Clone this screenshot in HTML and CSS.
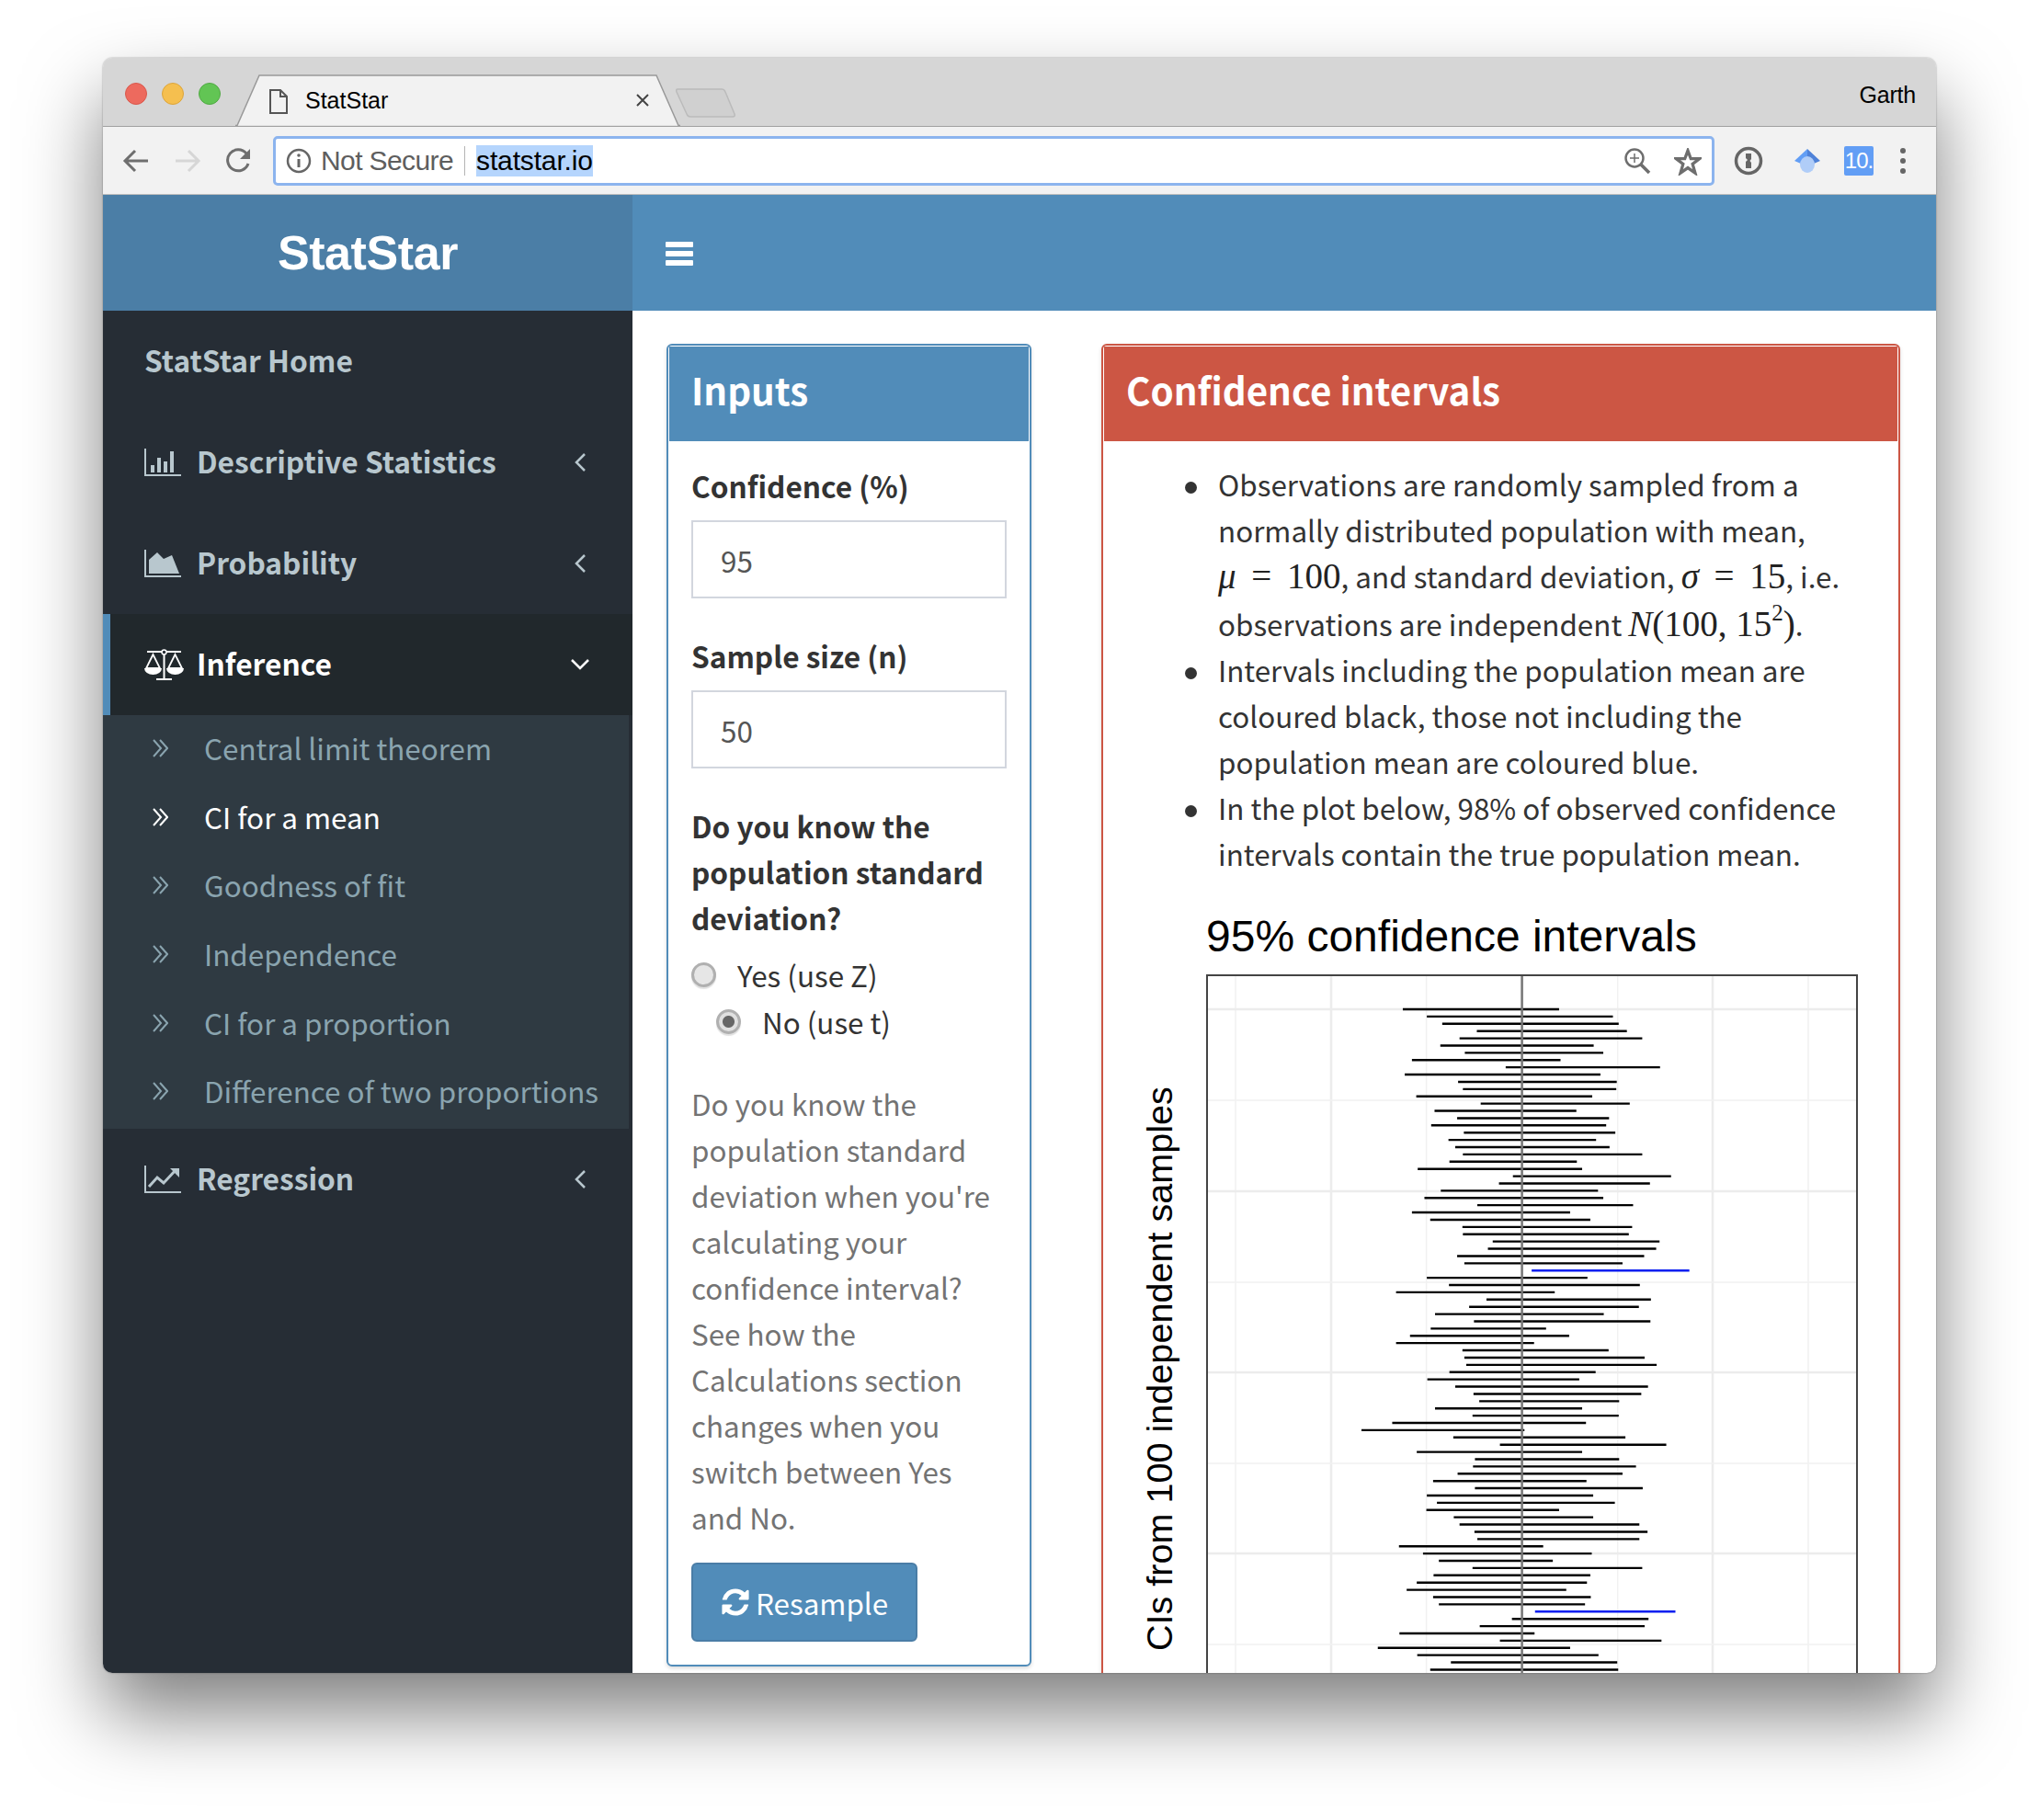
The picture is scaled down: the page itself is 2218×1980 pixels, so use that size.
FILE: index.html
```html
<!DOCTYPE html>
<html lang="en">
<head>
    <meta charset="UTF-8">
    <meta name="viewport" content="width=device-width, initial-scale=1.0">
    <title>StatStar</title>
    <link rel="stylesheet" href="styles.css">
</head>
<body>

<div class="window">

    <!-- browser tab strip -->
    <div class="tabstrip">
        <div class="lights">
            <span class="light red"></span>
            <span class="light yellow"></span>
            <span class="light green"></span>
        </div>
        <div class="tab">
            <svg class="tab-shape" width="484" height="56" viewBox="0 0 484 56">
                <path d="M0 55.500H2L26 1H458L482 55.500H484" fill="#f2f2f2" stroke="#999" stroke-width="1.500"/>
            </svg>
            <svg class="tab-doc" width="20" height="27" viewBox="0 0 20 27">
                <path d="M1 1H12L19 8V26H1ZM12 1V8H19" fill="none" stroke="#555" stroke-width="2"/>
            </svg>
            <span class="tab-title">StatStar</span>
            <svg class="tab-close" width="14" height="14" viewBox="0 0 14 14">
                <path d="M1 1L13 13M13 1L1 13" stroke="#444" stroke-width="2"/>
            </svg>
        </div>
        <svg class="newtab" width="66" height="32" viewBox="0 0 66 32">
            <path d="M2 1H50Q53 1 54 4L64 28Q65 31 62 31H16Q13 31 12 28L1 4Q0 1 2 1Z" fill="#d0d0d0" stroke="#bbb" stroke-width="1.500"/>
        </svg>
        <span class="profile">Garth</span>
    </div>

    <!-- browser toolbar -->
    <div class="toolbar">
        <svg class="navicon" width="30" height="30" viewBox="0 0 30 30">
            <path d="M28 15H4M14 4L3 15L14 26" fill="none" stroke="#6e6e6e" stroke-width="3"/>
        </svg>
        <svg class="navicon" width="30" height="30" viewBox="0 0 30 30">
            <path d="M2 15H26M16 4L27 15L16 26" fill="none" stroke="#d6d6d6" stroke-width="3"/>
        </svg>
        <svg class="navicon" width="30" height="30" viewBox="0 0 30 30">
            <path d="M25 18A11.500 11.500 0 1 1 23 7" fill="none" stroke="#6e6e6e" stroke-width="3"/>
            <path d="M27 2V13H16Z" fill="#6e6e6e"/>
        </svg>
        <div class="omnibox">
            <svg width="28" height="28" viewBox="0 0 28 28">
                <circle cx="14" cy="14" r="12" fill="none" stroke="#666" stroke-width="2.500"/>
                <path d="M14 12V21" stroke="#666" stroke-width="3"/>
                <circle cx="14" cy="8" r="1.800" fill="#666"/>
            </svg>
            <span class="not-secure">Not Secure</span>
            <span class="omni-sep"></span>
            <span class="url">statstar.io</span>
            <svg class="omni-zoom" width="30" height="30" viewBox="0 0 30 30">
                <circle cx="12" cy="12" r="9.500" fill="none" stroke="#6e6e6e" stroke-width="2.500"/>
                <path d="M12 7V17M7 12H17" stroke="#6e6e6e" stroke-width="1.500"/>
                <path d="M19 19L28 28" stroke="#6e6e6e" stroke-width="3.500"/>
            </svg>
            <svg class="omni-star" width="30" height="30" viewBox="0 0 32 32">
                <path d="M16 3L19.500 12.500H29.500L21.500 18.500L24.500 29L16 23L7.500 29L10.500 18.500L2.500 12.500H12.500Z" fill="none" stroke="#6e6e6e" stroke-width="3.500"/>
            </svg>
        </div>
        <svg class="ext-onepass" width="32" height="32" viewBox="0 0 32 32">
            <circle cx="16" cy="16" r="13.500" fill="none" stroke="#666" stroke-width="3.500"/>
            <path d="M13 8H19V14L17.500 16L19 18V24H13V17L15 15L13 13Z" fill="#666"/>
        </svg>
        <svg class="ext-hat" width="30" height="28" viewBox="0 0 30 28">
            <path d="M15 1L1 14L15 20Z" fill="#629ef5"/>
            <path d="M15 1L29 14L15 20Z" fill="#4f82d8"/>
            <ellipse cx="15" cy="18" rx="8" ry="9" fill="#b0cdf8"/>
        </svg>
        <span class="ext-count">10.</span>
        <span class="menu-dots"><i></i><i></i><i></i></span>
    </div>

    <div class="app">

        <aside class="side">
            <div class="logo">StatStar</div>
            <ul class="menu">
                <li class="menu-row"><span class="menu-label">StatStar Home</span></li>
                <li class="menu-row">
                    <svg class="menu-icon" width="40" height="30" viewBox="0 0 40 30">
                        <path d="M1 0V29H40" fill="none" stroke="#b8c7ce" stroke-width="2"/>
                        <path d="M7 18h4v8h-4zM14 10h4v16h-4zM21 14h4v12h-4zM28 3h4v23h-4z" fill="#b8c7ce"/>
                    </svg>
                    <span class="menu-label">Descriptive Statistics</span>
                    <svg class="chev" width="12" height="20" viewBox="0 0 12 20"><path d="M11 1L2 10L11 19" fill="none" stroke="#b8c7ce" stroke-width="2.500"/></svg>
                </li>
                <li class="menu-row">
                    <svg class="menu-icon" width="40" height="30" viewBox="0 0 40 30">
                        <path d="M1 0V29H40" fill="none" stroke="#b8c7ce" stroke-width="2"/>
                        <path d="M5 26V11L14 3L21 10L30 6L38 26Z" fill="#b8c7ce"/>
                    </svg>
                    <span class="menu-label">Probability</span>
                    <svg class="chev" width="12" height="20" viewBox="0 0 12 20"><path d="M11 1L2 10L11 19" fill="none" stroke="#b8c7ce" stroke-width="2.500"/></svg>
                </li>
                <li class="menu-row active">
                    <svg class="menu-icon scale" width="43" height="34" viewBox="0 0 43 34">
                        <path d="M21.500 4V32M13 33H30M3 3H40" stroke="#fff" stroke-width="2" fill="none"/>
                        <circle cx="21.500" cy="3.500" r="2.500" fill="#262d35" stroke="#fff" stroke-width="1.500"/>
                        <path d="M9.500 6L2 21H17ZM33.500 6L26 21H41Z" fill="none" stroke="#fff" stroke-width="1.800"/>
                        <path d="M0 21H19A9.500 7 0 0 1 0 21ZM24 21H43A9.500 7 0 0 1 24 21Z" fill="#fff"/>
                    </svg>
                    <span class="menu-label">Inference</span>
                    <svg class="chev-down" width="20" height="12" viewBox="0 0 20 12"><path d="M1 1L10 10L19 1" fill="none" stroke="#fff" stroke-width="2.500"/></svg>
                </li>
                <li>
                    <ul class="submenu">
                        <li class="sub-row">
                            <svg class="sub-icon" width="17" height="20" viewBox="0 0 17 20"><path d="M1 1L9 10L1 19M8 1L16 10L8 19" fill="none" stroke="currentColor" stroke-width="2"/></svg>
                            Central limit theorem
                        </li>
                        <li class="sub-row current">
                            <svg class="sub-icon" width="17" height="20" viewBox="0 0 17 20"><path d="M1 1L9 10L1 19M8 1L16 10L8 19" fill="none" stroke="currentColor" stroke-width="2"/></svg>
                            CI for a mean
                        </li>
                        <li class="sub-row">
                            <svg class="sub-icon" width="17" height="20" viewBox="0 0 17 20"><path d="M1 1L9 10L1 19M8 1L16 10L8 19" fill="none" stroke="currentColor" stroke-width="2"/></svg>
                            Goodness of fit
                        </li>
                        <li class="sub-row">
                            <svg class="sub-icon" width="17" height="20" viewBox="0 0 17 20"><path d="M1 1L9 10L1 19M8 1L16 10L8 19" fill="none" stroke="currentColor" stroke-width="2"/></svg>
                            Independence
                        </li>
                        <li class="sub-row">
                            <svg class="sub-icon" width="17" height="20" viewBox="0 0 17 20"><path d="M1 1L9 10L1 19M8 1L16 10L8 19" fill="none" stroke="currentColor" stroke-width="2"/></svg>
                            CI for a proportion
                        </li>
                        <li class="sub-row">
                            <svg class="sub-icon" width="17" height="20" viewBox="0 0 17 20"><path d="M1 1L9 10L1 19M8 1L16 10L8 19" fill="none" stroke="currentColor" stroke-width="2"/></svg>
                            Difference of two proportions
                        </li>
                    </ul>
                </li>
                <li class="menu-row">
                    <svg class="menu-icon" width="40" height="30" viewBox="0 0 40 30">
                        <path d="M1 0V29H40" fill="none" stroke="#b8c7ce" stroke-width="2"/>
                        <path d="M5 23L14 13L21 19L34 5" fill="none" stroke="#b8c7ce" stroke-width="3"/>
                        <path d="M28 3H38V13Z" fill="#b8c7ce"/>
                    </svg>
                    <span class="menu-label">Regression</span>
                    <svg class="chev" width="12" height="20" viewBox="0 0 12 20"><path d="M11 1L2 10L11 19" fill="none" stroke="#b8c7ce" stroke-width="2.500"/></svg>
                </li>
            </ul>
        </aside>

        <main class="main">
            <div class="navbar">
                <span class="hamburger"><i></i><i></i><i></i></span>
            </div>

            <div class="content">

                <section class="box box-inputs">
                    <h3 class="box-head">Inputs</h3>
                    <div class="box-body">
                        <label class="field-label">Confidence (%)</label>
                        <input class="field" type="text" value="95">

                        <label class="field-label">Sample size (n)</label>
                        <input class="field" type="text" value="50">

                        <label class="field-label question">Do you know the population standard deviation?</label>
                        <label class="radio-row"><input type="radio" name="known"> Yes (use Z)</label>
                        <label class="radio-row inline"><input type="radio" name="known" checked> No (use t)</label>

                        <p class="help">Do you know the population standard deviation when you're calculating your confidence interval? See how the Calculations section changes when you switch between Yes and No.</p>

                        <button class="btn">
                            <svg width="34" height="34" viewBox="0 0 1792 1792"><path fill="#fff" d="M1639 1056q0 5-1 7-64 268-268 434.500t-478 166.500q-146 0-282.500-55t-243.500-157l-129 129q-19 19-45 19t-45-19-19-45v-448q0-26 19-45t45-19h448q26 0 45 19t19 45-19 45l-137 137q71 66 161 102t187 36q134 0 250-65t186-179q11-17 53-117 8-23 30-23h192q13 0 22.500 9.500t9.500 22.500zm25-800v448q0 26-19 45t-45 19h-448q-26 0-45-19t-19-45 19-45l138-138q-148-137-349-137-134 0-250 65t-186 179q-11 17-53 117-8 23-30 23h-199q-13 0-22.500-9.500t-9.500-22.500v-7q65-268 270-434.500t480-166.500q146 0 284 55.500t245 156.500l130-129q19-19 45-19t45 19 19 45z"/></svg>
                            Resample
                        </button>
                    </div>
                </section>

                <section class="box box-results">
                    <h3 class="box-head">Confidence intervals</h3>
                    <ul class="notes">
                        <li>Observations are randomly sampled from a normally distributed population with mean, <span class="math eq"><em>&mu;</em> = 100</span>, and standard deviation, <span class="math eq"><em>&sigma;</em> = 15</span>, i.e. observations are independent <span class="math"><em>N</em>(100, 15<sup>2</sup>)</span>.</li>
                        <li>Intervals including the population mean are coloured black, those not including the population mean are coloured blue.</li>
                        <li>In the plot below, 98% of observed confidence intervals contain the true population mean.</li>
                    </ul>

                    <!-- plot drawn in page coordinates so the gridlines read straight off the reference -->
                    <svg class="plot" width="790" height="860" viewBox="1240 970 790 860">
                        <text class="plot-title" x="1312" y="1035">95% confidence intervals</text>
                        <text class="plot-ylabel" transform="translate(1275 1796) rotate(-90)">CIs from 100 independent samples</text>

                        <path d="M1344 1060V1830M1551.600 1060V1830M1759.700 1060V1830M1967 1060V1830" stroke="#f1f1f1" stroke-width="1.500"/>
                        <path d="M1448 1060V1830M1655.600 1060V1830M1863 1060V1830" stroke="#ececec" stroke-width="2.500"/>
                        <path d="M1313 1197H2020M1313 1395H2020M1313 1592H2020M1313 1789H2020" stroke="#f1f1f1" stroke-width="1.500"/>
                        <path d="M1313 1098H2020M1313 1296H2020M1313 1493H2020M1313 1690H2020" stroke="#ececec" stroke-width="2.500"/>

                        <g transform="translate(1220 1098) scale(0.523 7.895)">
                            <path class="ci" stroke="#000" d="M585 0H910M635 1H1022M667 2H1034M739 3H1051M703 4H1083M663 5H982M714 6H1002M604 7H913M799 8H1120M589 9H996M700 10H1030M710 11H1029M613 12H979M747 13H1057M651 14H946M698 15H1014M644 16H1008M712 17H1027M680 18H987M694 19H1015M710 20H1083M682 21H947M616 22H958M814 23H1143M785 24H1099M664 25H991M630 26H1002M740 27H1064M604 28H933M642 29H975M709 30H1062M710 31H1055M772 32H1119M762 33H1112M698 34H1087M713 35H1042M635 37H969M681 38H1078M571 39H901M759 40H1101M723 41H1076M652 42H1003M733 43H1100M643 44H883M600 45H931M571 46H858M709 47H1013M713 48H1088M717 49H1113M682 50H986M636 51H952M694 52H1095M732 53H1081M744 54H1035M652 55H958M730 56H1034M563 57H966M499 58H838M690 59H1048M787 60H1133M614 61H958M735 62H1035M731 63H1070M699 64H1042M648 65H967M735 66H1084M635 67H981M656 68H1026M634 69H910M691 70H981M703 71H1077M734 72H1094M740 73H1077M577 74H877M627 75H978M660 76H897M730 77H1083M649 78H975M614 79H968M593 80H925M648 81H976M660 82H964M812 84H1096M745 85H1088M578 86H859M787 87H1123M533 88H933M615 89H992M685 90H1031M642 91H1033"/>
                            <path class="ci" stroke="#0a1ff0" d="M853 36H1181M860 83H1152"/>
                        </g>

                        <path d="M1655.600 1060V1830" stroke="#777" stroke-width="2.500"/>
                        <path d="M1313 1830V1061H2020V1830" fill="none" stroke="#444" stroke-width="2"/>
                    </svg>
                </section>

            </div>
        </main>

    </div>
</div>

</body>
</html>
```
FILE: styles.css
```css
/* Page and browser window */
html, body {
    margin: 0;
    padding: 0;
    background-color: #fff;
}

body {
    width: 2218px;
    height: 1980px;
    padding: 63px 0 0 112px;
    box-sizing: border-box;
    overflow: hidden;
    font-family: "Noto Sans CJK SC", "Source Sans Pro", "Noto Sans", sans-serif;
    color: #333;
}

ul {
    list-style: none;
    margin: 0;
    padding: 0;
}

.window {
    width: 1994px;
    height: 1757px;
    display: flex;
    flex-direction: column;
    border-radius: 10px;
    overflow: hidden;
    background-color: #fff;
    box-shadow: 0 44px 84px rgba(0, 0, 0, 0.5), 0 0 2px rgba(0, 0, 0, 0.4);
}

/* Tab strip */
.tabstrip {
    height: 74px;
    flex: none;
    display: flex;
    align-items: flex-end;
    background-color: #d6d6d6;
    box-sizing: border-box;
    font-family: "Liberation Sans", Arial, sans-serif;
    color: #000;
}

.lights {
    display: flex;
    gap: 16px;
    padding: 0 0 23px 24px;
    width: 120px;
    flex: none;
}

.light {
    width: 24px;
    height: 24px;
    border-radius: 50%;
    box-sizing: border-box;
}

.light.red {
    background-color: #ed6a5e;
    border: 1px solid #d9584c;
}

.light.yellow {
    background-color: #f5bf4f;
    border: 1px solid #dca53b;
}

.light.green {
    background-color: #62c554;
    border: 1px solid #51a944;
}

.tab {
    position: relative;
    width: 484px;
    height: 56px;
    flex: none;
    display: flex;
    align-items: center;
    padding: 0 0 0 37px;
    box-sizing: border-box;
}

.tab-shape {
    position: absolute;
    left: 0;
    top: 0;
}

.tab-doc {
    position: relative;
    top: 1px;
}

.tab-title {
    position: relative;
    margin-left: 19px;
    font-size: 25px;
    flex: 1;
}

.tab-close {
    position: relative;
    margin-right: 34px;
}

.newtab {
    margin: 0 0 9px -5px;
    flex: none;
}

.profile {
    margin-left: auto;
    padding: 0 22px 19px 0;
    font-size: 25px;
    letter-spacing: -0.2px;
}

/* Toolbar */
.toolbar {
    height: 75px;
    flex: none;
    display: flex;
    align-items: center;
    background-color: #f2f2f2;
    border-top: 1.5px solid #a0a0a0;
    border-bottom: 1.5px solid #bdbdbd;
    box-sizing: border-box;
    padding-left: 21px;
    font-family: "Liberation Sans", Arial, sans-serif;
}

.navicon {
    margin-right: 26px;
    flex: none;
}

.omnibox {
    width: 1568px;
    height: 54px;
    margin-left: -4px;
    flex: none;
    display: flex;
    align-items: center;
    box-sizing: border-box;
    padding-left: 11px;
    background-color: #fff;
    border: 3px solid #8cb4ee;
    border-radius: 5px;
}

.not-secure {
    margin-left: 10px;
    font-size: 30px;
    letter-spacing: -0.6px;
    color: #5e5e5e;
}

.omni-sep {
    width: 1px;
    height: 32px;
    margin: 0 12px 0 12px;
    background-color: #b5b5b5;
}

.url {
    height: 34px;
    line-height: 34px;
    font-size: 30px;
    letter-spacing: -0.15px;
    color: #000;
    background-color: #b5d5fd;
}

.omni-zoom {
    margin-left: auto;
}

.omni-star {
    margin: 2px 11px 0 25px;
}

.ext-onepass {
    margin-left: 21px;
    flex: none;
}

.ext-hat {
    margin-left: 33px;
    flex: none;
}

.ext-count {
    width: 32px;
    height: 32px;
    margin-left: 25px;
    flex: none;
    border-radius: 2px;
    line-height: 32px;
    text-align: center;
    font-size: 24px;
    letter-spacing: -1px;
    color: #fff;
    background-color: #629ef5;
}

.menu-dots {
    margin-left: 29px;
    display: flex;
    flex-direction: column;
    gap: 5px;
}

.menu-dots i {
    display: block;
    width: 6px;
    height: 6px;
    border-radius: 50%;
    background-color: #666;
}

/* App frame */
.app {
    flex: 1;
    min-height: 0;
    display: flex;
}

.side {
    width: 576px;
    flex: none;
    background-color: #262d35;
    color: #b8c7ce;
}

.logo {
    height: 126px;
    line-height: 126px;
    text-align: center;
    font-family: "Liberation Sans", Arial, sans-serif;
    font-size: 52px;
    font-weight: bold;
    letter-spacing: -0.4px;
    color: #fff;
    background-color: #4b7ea6;
}

.menu-row {
    height: 110px;
    display: flex;
    align-items: center;
    padding: 0 51px 0 45px;
    box-sizing: border-box;
    font-size: 31.7px;
    font-weight: 700;
}

.menu-label {
    position: relative;
    top: -2px;
}

.menu-icon {
    margin-right: 17px;
    flex: none;
}

.chev {
    margin-left: auto;
}

.chev-down {
    margin-left: auto;
    margin-right: -4px;
}

.menu-row.active {
    padding-left: 37px;
    border-left: 8px solid #518cb9;
    background-color: #21282c;
    color: #fff;
}

.menu-icon.scale {
    margin-right: 14px;
}

.submenu {
    margin-right: 4px;
    padding-bottom: 2px;
    background-color: #2f3a42;
}

.sub-row {
    height: 74.6px;
    display: flex;
    align-items: center;
    padding: 0 0 2px 54px;
    box-sizing: border-box;
    font-size: 31.4px;
    line-height: 40px;
    color: #8aa4af;
}

.sub-row.current {
    color: #fff;
}

.sub-icon {
    margin-right: 39px;
    flex: none;
}

/* Main area */
.main {
    flex: 1;
    min-width: 0;
    display: flex;
    flex-direction: column;
}

.navbar {
    height: 126px;
    flex: none;
    display: flex;
    align-items: center;
    padding-left: 36px;
    background-color: #518cb9;
}

.hamburger {
    display: flex;
    flex-direction: column;
    gap: 4px;
    padding-top: 1px;
}

.hamburger i {
    display: block;
    width: 30px;
    height: 6px;
    border-radius: 1px;
    background-color: #fff;
}

.content {
    flex: 1;
    min-height: 0;
    display: flex;
    align-items: flex-start;
    gap: 76px;
    padding: 36px 39px 0 37px;
    overflow: hidden;
}

/* Boxes */
.box {
    box-sizing: border-box;
    border: 2px solid #518cb9;
    border-radius: 6px;
    background-color: #fff;
    box-shadow: 0 2px 4px rgba(0, 0, 0, 0.15);
}

.box-head {
    height: 103px;
    margin: 1px 1px 0;
    line-height: 94px;
    padding-left: 24px;
    font-size: 40.3px;
    font-weight: 700;
    color: #fff;
    background-color: #518cb9;
}

.box-inputs {
    width: 397px;
    flex: none;
}

.box-body {
    padding: 23px 25px 25px;
    font-size: 31.4px;
    line-height: 50px;
}

.field-label {
    display: block;
    font-size: 31.6px;
    font-weight: 700;
}

.field {
    display: block;
    width: 343px;
    height: 85px;
    margin: 13px 0 37px;
    padding: 2px 0 0 30px;
    box-sizing: border-box;
    border: 2px solid #d2d6de;
    font-family: inherit;
    font-size: 31.4px;
    color: #555;
    outline: none;
}

.question {
    margin-bottom: 12px;
}

.radio-row {
    display: flex;
    align-items: center;
    height: 51px;
    gap: 23px;
}

.radio-row.inline {
    margin-left: 27px;
}

.radio-row input {
    appearance: none;
    width: 27px;
    height: 27px;
    margin: 0;
    flex: none;
    border: 3px solid #b0b0b0;
    border-radius: 50%;
    background-color: #e6e6e6;
    box-shadow: 0 2px 1px rgba(0, 0, 0, 0.12);
}

.radio-row input:checked {
    background: radial-gradient(circle, #666 0 6px, #e0e0e0 7px);
}

.help {
    margin: 39px 0 24px;
    color: #737373;
}

.btn {
    width: 246px;
    height: 86px;
    display: flex;
    align-items: center;
    padding: 0 0 0 29px;
    gap: 5px;
    box-sizing: border-box;
    border: 2px solid #4a7da6;
    border-radius: 6px;
    background-color: #518cb9;
    color: #fff;
    font-family: inherit;
    font-size: 31.4px;
    cursor: pointer;
}

.box-results {
    flex: 1;
    min-width: 0;
    height: 1600px;
    border-color: #cc5644;
}

.box-results .box-head {
    background-color: #cc5644;
}

.notes {
    padding: 22px 50px 0 125px;
    font-size: 31.4px;
    line-height: 50px;
}

.notes li::before {
    content: "";
    display: inline-block;
    width: 13px;
    height: 13px;
    margin: 0 23px 0 -36px;
    border-radius: 50%;
    background-color: #333;
    vertical-align: 3px;
}

.math {
    font-family: "Liberation Serif", "Times New Roman", serif;
    font-size: 39px;
    line-height: 1;
    white-space: nowrap;
    color: #222;
}

.math.eq {
    word-spacing: 7px;
}

.math sup {
    font-size: 25px;
    line-height: 30px;
    vertical-align: 17px;
}

/* Plot */
.plot {
    display: block;
    margin: 16px 0 0 40px;
}

.plot-title {
    font-family: "Liberation Sans", Arial, sans-serif;
    font-size: 48px;
    fill: #000;
}

.plot-ylabel {
    font-family: "Liberation Sans", Arial, sans-serif;
    font-size: 39.6px;
    fill: #000;
}

.ci {
    fill: none;
    stroke-width: 2.4px;
    vector-effect: non-scaling-stroke;
}
```
